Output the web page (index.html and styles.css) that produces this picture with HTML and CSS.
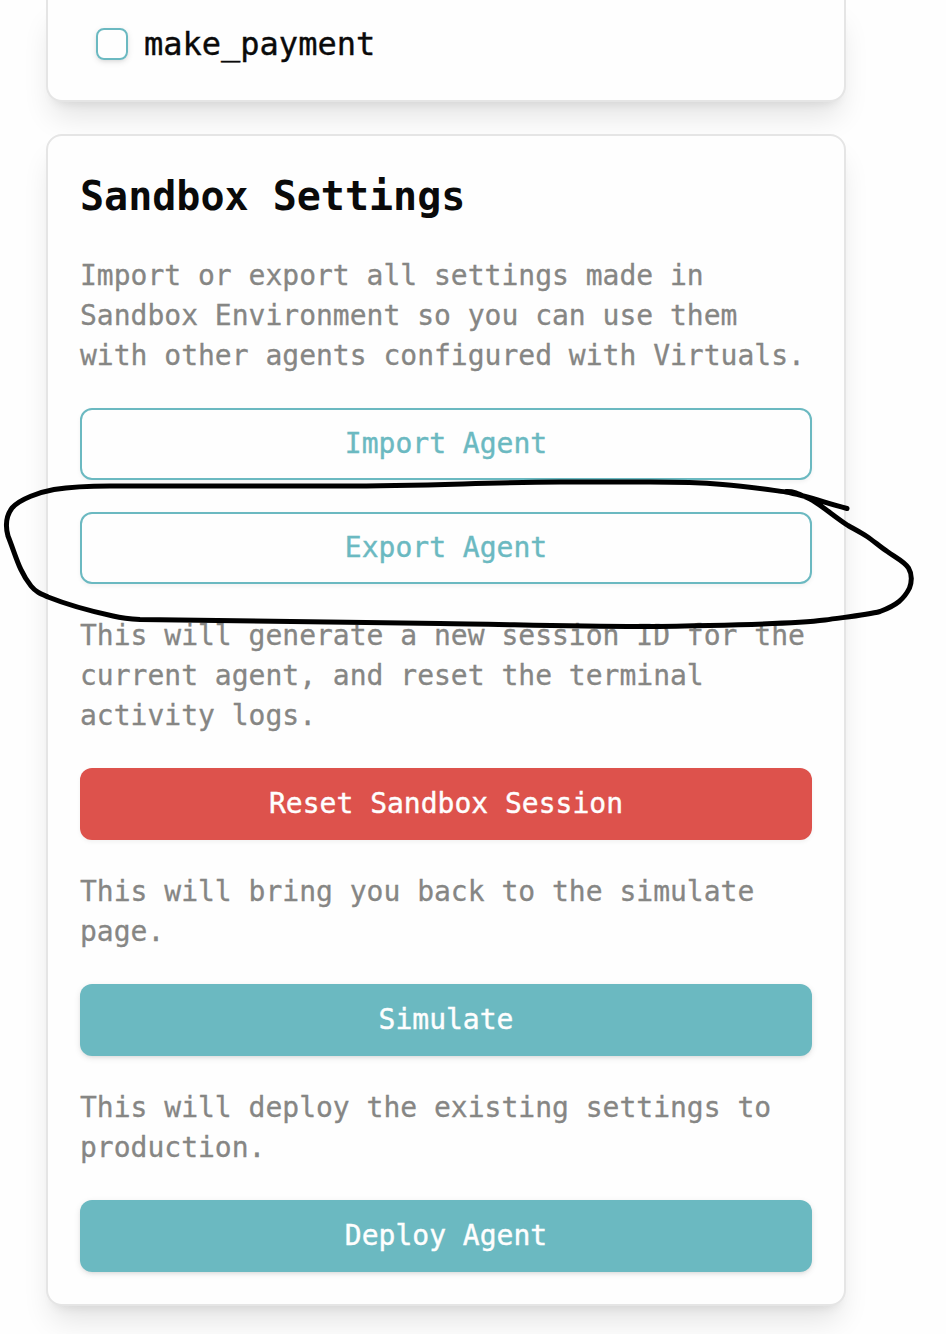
FILE: index.html
```html
<!DOCTYPE html>
<html lang="en">
<head>
<meta charset="utf-8">
<title>Sandbox Settings</title>
<link rel="stylesheet" href="styles.css">
</head>
<body>
<main class="page">
  <section class="card card-functions">
    <label class="option"><span class="checkbox"></span><span>make_payment</span></label>
  </section>
  <section class="card card-settings">
    <h2 class="title">Sandbox Settings</h2>
    <p class="text">Import or export all settings made in Sandbox Environment so you can use them with other agents configured with Virtuals.</p>
    <button class="button outline">Import Agent</button>
    <button class="button outline">Export Agent</button>
    <p class="text">This will generate a new session ID for the current agent, and reset the terminal activity logs.</p>
    <button class="button danger">Reset Sandbox Session</button>
    <p class="text">This will bring you back to the simulate page.</p>
    <button class="button primary">Simulate</button>
    <p class="text">This will deploy the existing settings to production.</p>
    <button class="button primary">Deploy Agent</button>
  </section>
  <svg class="annotation" width="946" height="180" viewBox="0 470 946 180" aria-hidden="true">
    <path d="M786 491.500C795 491 801 495 810 499C820 504 836 518 848 525.500C854 529 860 532 867 536.500C874 541 880 547 888 552C895 557 905 562 908.500 568C912 574 912 581 909.500 588C904 599 897 605 880 611.500C867 615 846 617 825 620C792 624 735 625.500 640 626.500C560 626.500 500 624 440 623.500C330 622 230 621 140 619.500C128 619 123 618.500 113 616C90 611 68 605 48 597C40 593.500 36 592 31 586C19 571 16 556 8 536C5 525 6 516 12 508C20 499 40 492 54 489.500C70 487 85 486 110 486H340C430 486 480 482.500 560 482H650C720 482 745 486.500 786 492C803 495 817 500 847 508.500"/>
  </svg>
</main>
</body>
</html>
```
FILE: styles.css
```css
* { box-sizing: border-box; }
html, body { margin: 0; }
body {
  background: #fefefe;
  color: #0a0a0a;
  font-family: "DejaVu Sans Mono", monospace;
}
.page {
  position: relative;
  display: flex;
  flex-direction: column;
  gap: 32px;
  width: 946px;
  height: 1334px;
  padding-left: 46px;
  overflow: hidden;
}
.card {
  flex: none;
  width: 800px;
  border: 2px solid #e5e5e5;
  border-radius: 16px;
  background: #fefefe;
  box-shadow: 0 20px 30px -6px rgba(0, 0, 0, .11), 0 8px 12px -8px rgba(0, 0, 0, .11);
}
.card-functions {
  border-top: 0;
  border-top-left-radius: 0;
  border-top-right-radius: 0;
  padding: 20px 48px 32px;
}
.option {
  display: flex;
  align-items: center;
  gap: 16px;
  font-size: 32px;
  line-height: 48px;
  -webkit-text-stroke: .4px currentColor;
}
.checkbox {
  width: 32px;
  height: 32px;
  border: 2px solid #6bb9c1;
  border-radius: 8px;
  box-shadow: 0 2px 6px rgba(0, 0, 0, .1), 0 2px 4px -2px rgba(0, 0, 0, .1);
}
.card-settings {
  display: flex;
  flex-direction: column;
  gap: 32px;
  padding: 32px;
}
.title {
  margin: 0;
  font-size: 40px;
  font-weight: 700;
  line-height: 56px;
}
.text {
  margin: 0;
  color: #868684;
  font-size: 28px;
  line-height: 40px;
  -webkit-text-stroke: .3px currentColor;
}
.button {
  height: 72px;
  padding: 0;
  border: 0;
  border-radius: 12px;
  font: 28px/40px "DejaVu Sans Mono", monospace;
  -webkit-text-stroke: .4px currentColor;
  box-shadow: 0 2px 6px rgba(0, 0, 0, .1), 0 2px 4px -2px rgba(0, 0, 0, .1);
}
.outline {
  border: 2px solid #6bb9c1;
  background: #fefefe;
  color: #6bb9c1;
  box-shadow: 0 2px 4px rgba(0, 0, 0, .05);
}
.primary { background: #6bb9c1; color: #fefefe; }
.danger {
  background: #dd524c;
  color: #fefefe;
  box-shadow: 0 2px 4px rgba(0, 0, 0, .05);
}
.annotation {
  position: absolute;
  left: 0;
  top: 470px;
  pointer-events: none;
}
.annotation path {
  fill: none;
  stroke: #000;
  stroke-width: 5;
  stroke-linecap: round;
  stroke-linejoin: round;
}
```
